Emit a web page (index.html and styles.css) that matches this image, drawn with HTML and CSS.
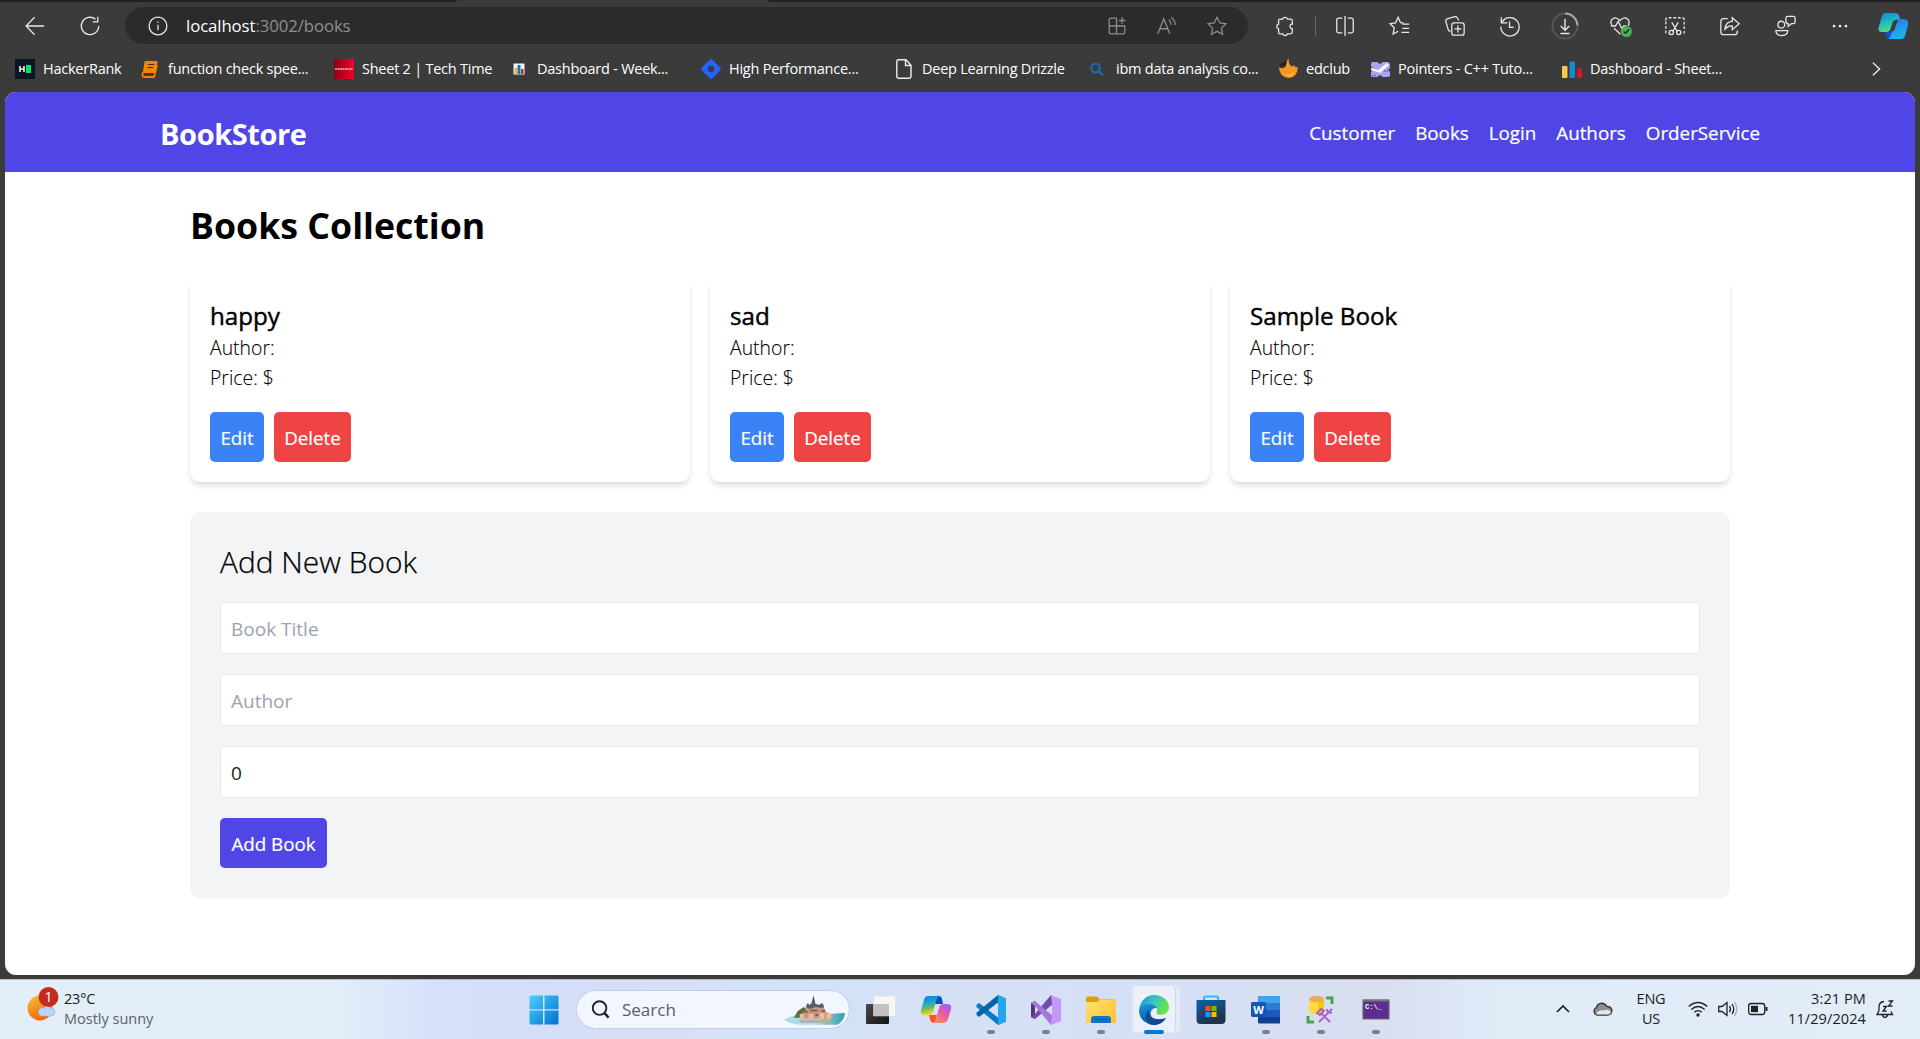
FILE: index.html
```html
<!DOCTYPE html>
<html lang="en">
<head>
<meta charset="utf-8">
<title>BookStore</title>
<link rel="stylesheet" href="styles.css">
</head>
<body>
<div class="screen">
  <header class="browser">
    <div class="tabstrip"><i class="tab-left"></i><i class="tab-right"></i></div>
    <div class="toolbar">
      <div class="nav-buttons">
        <svg class="ico" viewBox="0 0 24 24"><path d="M22 12H2.500M11.500 2.500L2.300 12l9.200 9.500"/></svg>
        <svg class="ico" viewBox="0 0 24 24"><path d="M21.500 12A9.500 9.500 0 1 1 18 4.600M20.500 2v5.500h-5.500"/></svg>
      </div>
      <div class="address">
        <svg class="ico info" viewBox="0 0 24 24"><circle cx="12" cy="12" r="9.700"/><path d="M12 10.500v6M12 7v1.500"/></svg>
        <span class="url"><b>localhost</b>:3002/books</span>
        <div class="address-icons">
          <svg class="ico" viewBox="0 0 24 24"><path d="M3.500 5a1.500 1.500 0 0 1 1.500-1.500h6.500v17H5A1.500 1.500 0 0 1 3.500 19zM3.500 12H20.500v7a1.500 1.500 0 0 1-1.500 1.500h-7.500M17.500 2.500v7M14 6h7"/></svg>
          <svg class="ico" viewBox="0 0 24 24"><path d="M2 20.500L8.500 4l6.500 16.500M4.500 15h8M14 5q2.500 2.200 2.500 5.500M16.500 2.500q4.500 3.500 4.500 8.500"/></svg>
          <svg class="ico" viewBox="0 0 24 24"><path d="M12 2.500l3 6.200 6.800.9-5 4.700 1.300 6.800-6.100-3.300-6.100 3.300 1.300-6.800-5-4.700 6.800-.9z"/></svg>
        </div>
      </div>
      <div class="actions">
        <div class="ext"><svg class="ico" viewBox="0 0 24 24"><path d="M6.500 4.500H9.500a2.700 2.700 0 0 1 5.200 0H18q2 0 2 2v3.500h-1a2.600 2.600 0 0 0 0 4.800h1v3.700q0 2-2 2H14.700a2.700 2.700 0 0 1-5.200 0H6.500q-1.500 0-1.500-1.500v-3.800a2.700 2.700 0 0 1 0-5.200V6q0-1.500 1.500-1.500z"/></svg></div>
        <svg class="ico" viewBox="0 0 24 24"><path d="M12 1v22M9 3.500H5a2 2 0 0 0-2 2v12a2 2 0 0 0 2 2h4M15 3.500h4a2 2 0 0 1 2 2v12a2 2 0 0 1-2 2h-4"/></svg>
        <svg class="ico" viewBox="0 0 24 24"><path d="M16 8.800l-3.500-.4L10 2.500 7.200 8.600l-6 .8 4.500 4.500-1.200 6.800 5.500-3M14.500 10H22M14.500 14.500H22M13.500 19H22"/></svg>
        <svg class="ico" viewBox="0 0 24 24"><rect x="8.500" y="8.500" width="13.500" height="13.500" rx="2.500"/><path d="M15.200 11.500v7.500M11.500 15.200H19M7 18c-2-.5-2.500-1.500-3-4L2 7q-.4-2 2-3l7-2q2.500-.5 3.500 1l1.500 3"/></svg>
        <svg class="ico" viewBox="0 0 24 24"><path d="M3 8.500A10 10 0 1 1 2 12.500M2.500 2.500v6H9M11.500 7v6.500h4.500"/></svg>
        <svg class="ico big" viewBox="0 0 28 28"><circle cx="14" cy="14" r="12.500" stroke="#565656" stroke-width="2"/><path d="M14 1.500A12.500 12.500 0 0 1 26.500 13.500" stroke="#aaa" stroke-width="2"/><path d="M14 7v11M9.800 14l4.200 4.300 4.200-4.300M9.500 21.500h9"/></svg>
        <svg class="ico" viewBox="0 0 24 24"><path d="M3 11C0 5 6 0 12 6c6-6 12-1 9 6M2 12h5l3-5 4 8 2-3h3M5.500 14.500l7 6.500"/><circle cx="19" cy="18" r="6" fill="#4caf50" stroke="none"/><path d="M16 18l2 2 4-4.500" stroke="#222"/></svg>
        <svg class="ico" viewBox="0 0 24 24"><path d="M2 6V5q0-2 2-2h16q2 0 2 2v14q0 1.500-2 1.500h-1M2 7v12q0 1.500 2 1.500h1" stroke-dasharray="3 2"/><path d="M8.500 8l6 10M15.500 8l-6 10"/><circle cx="8" cy="19" r="2.300"/><circle cx="16" cy="19" r="2.300"/></svg>
        <svg class="ico" viewBox="0 0 24 24"><path d="M9.500 4H5a3 3 0 0 0-3 3v11.500a3 3 0 0 0 3 3h12a3 3 0 0 0 3-3V17M14.500 3L22 9.500 14.500 16v-4Q10 11.500 6.500 15.500 7 7.500 14.500 7z"/></svg>
        <svg class="ico" viewBox="0 0 24 24"><circle cx="8" cy="10.500" r="3.700"/><path d="M2 17h13q0 5.500-6.500 5.500T2 17zM13 3.500q0-2 2-2h6q2 0 2 2v4q0 2-2 2h-2l-3.500 3v-3q-2.500 0-2.500-3z"/></svg>
        <svg class="ico" viewBox="0 0 24 24"><g fill="#eee" stroke="none"><circle cx="5.500" cy="12" r="1.500"/><circle cx="12" cy="12" r="1.500"/><circle cx="18.500" cy="12" r="1.500"/></g></svg>
        <svg class="copilot-top" viewBox="0 0 31 28"><defs><linearGradient id="ca" x2=".3" y2="1"><stop stop-color="#0a86d8"/><stop offset=".5" stop-color="#19b8c0"/><stop offset="1" stop-color="#58dc82"/></linearGradient><linearGradient id="cb" x2=".3" y2="1"><stop stop-color="#2d75e8"/><stop offset="1" stop-color="#19b4f0"/></linearGradient></defs><path d="M7 20h7l3-1-3 7q-3 2-5 0z" fill="#1a4fd0"/><path d="M7 1h11q3 0 4 6l-4 1q-3 0-4 4l-2 6q-1 2-4 2H4q-5 0-3-6L4 4q1-3 3-3z" fill="url(#ca)"/><path d="M19 7h7q5 0 4 6l-3 11q-1 3-4 3H10q2-1 3-4l4-13q1-3 2-3z" fill="url(#cb)"/><path d="M18 8h2l-4 11h-3l2-8q1-3 3-3z" fill="#3b3b3b"/></svg>
      </div>
    </div>
    <div class="bookmarks">
      <div class="bm"><svg viewBox="0 0 20 20"><path fill="#0b1424" d="M0 0h20v20H0z"/><path d="M5 7v6M9 7v6M5 10h4" stroke="#eee" stroke-width="1.600"/><path fill="#0be560" d="M11 6h5v8h-5z"/></svg><span>HackerRank</span></div>
      <div class="bm"><svg viewBox="0 0 20 20"><path d="M5.500 3h11l-2.500 10H4z" fill="#f88305" stroke="#f88305" stroke-width="2" stroke-linejoin="round"/><path d="M3 13q-1.500 5 1.500 5h9.500l3-12" fill="none" stroke="#f88305" stroke-width="1.800"/><path d="M8 5.500h6M7 8.500h6M5 15.500h9" stroke="#4b2b0a" stroke-width="1.200"/></svg><span>function check spee...</span></div>
      <div class="bm"><svg viewBox="0 0 20 20"><defs><linearGradient id="rd"><stop stop-color="#8c0012"/><stop offset="1" stop-color="#f5002d"/></linearGradient></defs><path fill="url(#rd)" d="M0 0h20v20H0z"/><path d="M1 10h18" stroke="#f6b9bf" stroke-width="1.500" stroke-dasharray="2 .5"/></svg><span>Sheet 2 | Tech Time</span></div>
      <div class="bm"><svg viewBox="0 0 20 20"><path fill="#f5f5f5" d="M4.500 4.500h11v11h-11z"/><path fill="#e8b73a" d="M5.500 9h2.500v6H5.500z"/><path fill="#1679b8" d="M8.500 6h3V15h-3z"/><path fill="#b32" d="M12 10h2.500v5H12z"/></svg><span>Dashboard - Week...</span></div>
      <div class="bm"><svg viewBox="0 0 20 20"><path d="M10 1.500L18.500 10 10 18.500 1.500 10z" fill="#2563ff" stroke="#2563ff" stroke-width="3" stroke-linejoin="round"/><circle cx="10" cy="10" r="3.200" fill="#3b3b3b"/></svg><span>High Performance...</span></div>
      <div class="bm"><svg viewBox="0 0 20 20"><path d="M4.500.8h7.500l5 5.500V17.500q0 1.700-1.700 1.700H4.500q-1.700 0-1.700-1.700v-15Q2.800.8 4.500.8zM11.500 1v5.500H17" fill="none" stroke="#eee" stroke-width="1.400"/></svg><span>Deep Learning Drizzle</span></div>
      <div class="bm"><svg viewBox="0 0 20 20"><circle cx="7.500" cy="9" r="4.300" fill="none" stroke="#1374cf" stroke-width="1.700"/><path d="M10.800 12.200l4 4" stroke="#1374cf" stroke-width="2"/></svg><span>ibm data analysis co...</span></div>
      <div class="bm"><svg viewBox="0 0 20 20"><path d="M1 8q4 3 7-1V2l3-2q-1 4 2 7 2 1 3-1 1 3 4 2-1 11-9 11Q1 18 1 8z" fill="#f79621"/><path d="M1.500 7q2-4 5.500-4l1-2 1 2-1.500 4-3-.5-1 2z" fill="#2d201b"/><path d="M6 14q6 4 11-3-1 7-7 7z" fill="#ffb34a"/></svg><span>edclub</span></div>
      <div class="bm"><svg viewBox="0 0 20 20"><path d="M2 3h5l3 2 3-2h5l2 2v4l-2 2 2 2v4l-2 1h-5l-3-2-3 2H2l-1-1v-4l2-3-2-3V5z" fill="#a9a5f4"/><path d="M1 9l7 2 9-7 2 2-9 8-9-3z" fill="#f8f8ff"/><path d="M2 16.500h4M14 12h4" stroke="#6a65c8" stroke-width="1.600" stroke-dasharray="1.500 1"/></svg><span>Pointers - C++ Tuto...</span></div>
      <div class="bm"><svg viewBox="0 0 20 20"><rect y="7" width="5.500" height="12" rx="1" fill="#f7c948"/><rect x="7.500" y="2.500" width="5.500" height="16.500" rx="1" fill="#168bd0"/><rect x="15" y="9" width="5" height="10" rx="1" fill="#c41e2c"/></svg><span>Dashboard - Sheet...</span></div>
      <svg class="more" viewBox="0 0 10 16"><path d="M1 1l7.500 7L1 15"/></svg>
    </div>
  </header>

  <main class="page">
    <nav class="site-nav">
      <a class="brand">BookStore</a>
      <div class="links"><a>Customer</a><a>Books</a><a>Login</a><a>Authors</a><a>OrderService</a></div>
    </nav>
    <div class="content">
      <h1>Books Collection</h1>
      <div class="cards">
        <article class="card"><h2>happy</h2><p>Author:</p><p>Price: $</p><div class="buttons"><button class="edit">Edit</button><button class="delete">Delete</button></div></article>
        <article class="card"><h2>sad</h2><p>Author:</p><p>Price: $</p><div class="buttons"><button class="edit">Edit</button><button class="delete">Delete</button></div></article>
        <article class="card"><h2>Sample Book</h2><p>Author:</p><p>Price: $</p><div class="buttons"><button class="edit">Edit</button><button class="delete">Delete</button></div></article>
      </div>
      <form class="add-form">
        <h2>Add New Book</h2>
        <input placeholder="Book Title">
        <input placeholder="Author">
        <input value="0">
        <button type="button" class="add">Add Book</button>
      </form>
    </div>
  </main>

  <footer class="taskbar">
    <div class="weather">
      <svg viewBox="0 0 34 36"><defs><linearGradient id="sun" x2=".4" y2="1"><stop stop-color="#f3c234"/><stop offset="1" stop-color="#f56a0c"/></linearGradient></defs><circle cx="13" cy="22" r="12.500" fill="url(#sun)"/><path d="M14 30a4 4 0 0 1-1-7q1-2 4-1 3-5 7 0 4 0 4 4 0 4-4 4z" fill="#b9d4fa" stroke="#8cb2ea" stroke-width=".6"/><circle cx="21.500" cy="11" r="10" fill="#c42b1c"/><text x="21.500" y="16" text-anchor="middle" class="badge-num">1</text></svg>
      <div><div class="temp">23°C</div><div class="sky">Mostly sunny</div></div>
    </div>
    <div class="apps">
      <div class="app start"><svg viewBox="0 0 30 30"><defs><linearGradient id="win" x2="1" y2="1"><stop stop-color="#4bd0ff"/><stop offset="1" stop-color="#0070cf"/></linearGradient></defs><path d="M2 .5h12v13.700H.5V2Q.5.500 2 .5zM15.500.5H28q1.500 0 1.500 1.500v12.200h-14zM.5 15.500H14v14H2q-1.500 0-1.500-1.500zM15.500 15.500h14V28q0 1.500-1.500 1.500H15.500z" fill="url(#win)"/></svg></div>
      <div class="search">
        <svg class="lens" viewBox="0 0 20 20"><circle cx="9" cy="8.500" r="7.200"/><path d="M14 13.500l4.500 5" stroke-width="2.600"/></svg>
        <span>Search</span>
        <svg class="castle" viewBox="0 0 62 30"><defs><linearGradient id="sea" x2="1"><stop stop-color="#a8dbe8"/><stop offset=".5" stop-color="#b9dde3"/><stop offset="1" stop-color="#2e9fae"/></linearGradient></defs><path d="M0 25q8-5 14-5l30-1 18-1q-1 9-8 12H16Q6 29 0 25z" fill="url(#sea)"/><path d="M10 23l4-7 6-4 4 3v8z" fill="#5b6d42"/><path d="M17 24v-5l5-3 1-5h3l1-2h2l1.300-8L31.500 9h3l1 3 5 0 2 5 5 2 3 5z" fill="#c39a81"/><path d="M22 12l2-4 2 2 2-2 2-8 2 9 3 1 4-2 2 4-3 1-6-1-6 2z" fill="#54606c"/><path d="M16 19h4v5h-4zM25 19h5v5h-5zM36 18h5v6h-5zM43 19h5v5h-5z" fill="#edbd9b"/><path d="M21 17h3M27 15.500h7M32 20h3M38 16h4" stroke="#77503f" stroke-width="1.500"/><path d="M15 25h32v3H17z" fill="#a3b4ae"/></svg>
      </div>
      <div class="app"><svg viewBox="0 0 30 30"><defs><linearGradient id="tv" x2="1" y2="1"><stop stop-color="#4b4b4b"/><stop offset="1" stop-color="#111"/></linearGradient></defs><rect y="9" width="23" height="20" rx="1" fill="url(#tv)"/><rect x="7.500" y="1" width="22" height="20" rx="1" fill="#f6f6f6" stroke="#ddd" stroke-width=".5"/><path d="M7.500 9H23v12H7.500z" fill="#c2c2c2"/></svg></div>
      <div class="app"><svg viewBox="0 0 30 30"><defs><linearGradient id="cl" x2=".2" y2="1"><stop stop-color="#147ee3"/><stop offset=".4" stop-color="#18a5d2"/><stop offset=".7" stop-color="#70bf52"/><stop offset="1" stop-color="#fdd01d"/></linearGradient><linearGradient id="cr" x1=".8" x2=".2" y2="1"><stop stop-color="#9c5cf5"/><stop offset=".5" stop-color="#ef5aa3"/><stop offset="1" stop-color="#fb9252"/></linearGradient></defs><path d="M15 1q5-1 6 3l1 5h-8z" fill="#1646c6"/><path d="M8 20h8l-2 8q-4 0-5-3z" fill="#f4592b"/><path d="M7 1h12q-3 1-4 5l-3 11q-1 3-4 3H4q-5 0-4-5L3 5q1-4 4-4z" fill="url(#cl)"/><path d="M23 9h3q5 0 4 5l-3 10q-1 4-5 4H11q3-1 4-4l3-11q1-4 5-4z" fill="url(#cr)"/></svg></div>
      <div class="app running"><svg viewBox="0 0 30 30"><path d="M22 0l8 3.500v23L22 30 1 12.500q-1.500-1.500 0-3L3 8l19 14.500z" fill="#087bc4"/><path d="M22 0v7.500L3 22l-2.200-2q-1-1 0-2.500z" fill="#0065a9"/><path d="M22 0l8 3.500v23L22 30z" fill="#25a5ee"/></svg></div>
      <div class="app running"><svg viewBox="0 0 30 30"><path d="M0 8l4-2v18l-4-2z" fill="#52357d"/><path d="M4 24l-4-2 4-3L20 0l2 9z" fill="#744aae"/><path d="M0 8l4-2 18 15-2 9L4 11z" fill="#a477dd"/><path d="M20 0l10 4v22l-10 4 1-9V9z" fill="#c796f8"/></svg></div>
      <div class="app running"><svg viewBox="0 0 30 30"><defs><linearGradient id="fo" x2="1" y2="1"><stop stop-color="#ffdf70"/><stop offset="1" stop-color="#ffc22e"/></linearGradient></defs><path d="M0 3q0-1.500 1.500-1.500H11l3 3h14.500q1.500 0 1.500 1.500v4H0z" fill="#e0a00b"/><path d="M0 7h11l3-2h16v23H0z" fill="url(#fo)"/><path d="M5 28v-4q0-3 3-3h14q3 0 3 3v4z" fill="#0d78cb"/><path d="M8.500 24.500h13" stroke="#095392" stroke-width="1.200"/></svg></div>
      <div class="app running active"><svg viewBox="0 0 30 30"><defs><linearGradient id="eg" x2="1" y2=".4"><stop stop-color="#1588d7"/><stop offset=".5" stop-color="#35c4c8"/><stop offset="1" stop-color="#69e34e"/></linearGradient><linearGradient id="eb" y2="1" x2=".3"><stop stop-color="#1797df"/><stop offset="1" stop-color="#0d56a4"/></linearGradient></defs><path d="M0 14C2 5 8 0 15 0c9 0 15 6 15 12 0 5-4 8-8 8-6 0-4-3-4-5 0-6-10-8-18-1z" fill="url(#eg)"/><path d="M0 15c3-7 15-8 18-2-5 0-7 3-6 7 1 5 8 7 15 3-4 7-13 9-19 5C3 26 0 21 0 15z" fill="url(#eb)"/><path d="M11 14c-4 6 3 13 16 9-4 6-10 8-15 6-7-3-7-11-1-15z" fill="#12488d"/></svg></div>
      <div class="app"><svg viewBox="0 0 30 30"><defs><linearGradient id="st" x2=".5" y2="1"><stop stop-color="#0b62b0"/><stop offset="1" stop-color="#203247"/></linearGradient></defs><path d="M8 6V3q0-1.500 1.500-1.500h11Q22 1.500 22 3v3" fill="none" stroke="#28c2f7" stroke-width="2.200"/><path d="M.5 5h29v20q0 4-4 4h-21q-4 0-4-4z" fill="url(#st)"/><path d="M9.500 11h5v5h-5z" fill="#f25022"/><path d="M15.500 11h5v5h-5z" fill="#7fba00"/><path d="M9.500 17h5v5h-5z" fill="#00a4ef"/><path d="M15.500 17h5v5h-5z" fill="#ffb900"/></svg></div>
      <div class="app running"><svg viewBox="0 0 30 30"><path d="M7 1h22v7H7z" fill="#41a5ee"/><path d="M7 8h22v7H7z" fill="#2b7cd3"/><path d="M7 15h22v7H7z" fill="#185abd"/><path d="M7 22h22v6.500H8q-1 0-1-1z" fill="#103f91"/><rect y="7" width="15" height="15" rx="1.500" fill="#1556b3"/><text x="7.500" y="18.500" class="word-letter" text-anchor="middle">W</text></svg></div>
      <div class="app running"><svg viewBox="0 0 30 30"><path d="M3 4v13q7 5 15 0V4z" fill="#fedb3d"/><path d="M12 5h6v12q-3 2-6 2z" fill="#f5c916"/><ellipse cx="10.500" cy="4" rx="7.500" ry="3.200" fill="#efa756"/><path d="M20 3h6v6M2 21v6h6" fill="none" stroke="#48a34f" stroke-width="3"/><path d="M13 27l10-10M15 18l9 9M11 18l4-4 3 2-4 4zM21 14q0 4 5 4M23 17l3-3" fill="none" stroke="#a95ccd" stroke-width="1.800"/></svg></div>
      <div class="app running"><svg viewBox="0 0 30 30"><path d="M2 5h26v19H2z" fill="#5c2d91" stroke="#6c6c6c" stroke-width="1.200"/><path d="M2 4.500h26v2H2z" fill="#777"/><text x="4" y="14" class="prompt">C:\_</text></svg></div>
    </div>
    <div class="tray">
      <svg class="t-up" viewBox="0 0 20 20"><path d="M4 13l6-6 6 6" stroke-width="1.700"/></svg>
      <svg class="t-cloud" viewBox="0 0 20 20"><path d="M4 16a4 4 0 0 1-.5-7.500C4 5 10 1.500 14 7.500c5 0 6 4.500 4 7q-1 1.500-3 1.500z" fill="#8d8d8d" stroke="#333"/><path d="M3 15q3-5 8-3.500 4-2 7 1.500-1 2.500-3 2.500H5z" fill="#e6e6e6" stroke="none"/></svg>
      <div class="lang"><div>ENG</div><div>US</div></div>
      <svg class="t-wifi" viewBox="0 0 20 20"><path d="M.7 7.500q9.300-8 18.600 0M3.300 10.500q6.700-6 13.400 0M6.200 13.300q3.800-3.400 7.600 0"/><circle cx="10" cy="16" r="1.700" fill="#222" stroke="none"/></svg>
      <svg class="t-sound" viewBox="0 0 20 20"><path d="M.7 7.500H4L9 3.500v13L4 12.500H.7z"/><path d="M11.500 7q2 3 0 6M14 5q3.500 5 0 10"/><path d="M16.500 3q4.500 7 0 14" stroke="#aab"/></svg>
      <svg class="t-batt" viewBox="0 0 20 20"><rect x=".7" y="4.500" width="16" height="11" rx="2.500"/><path d="M3 6.800h7v6.400H3z" fill="#222" stroke="none"/><path d="M18.500 8v4" stroke-width="2"/></svg>
      <div class="clock"><div>3:21 PM</div><div>11/29/2024</div></div>
      <svg class="t-bell" viewBox="0 0 20 20"><path d="M9 2.500Q4 3 4 8v3.500l-2 4h15.500l-1.500-3M7.500 16q.5 2.500 2.500 2.500T12.500 16M8 7.500h3.500l-3.500 4.500h3.500M13.500 2h4l-4 5h4"/></svg>
    </div>
  </footer>
</div>
</body>
</html>
```
FILE: styles.css
```css
* { box-sizing: border-box; }
body { margin: 0; font-family: "Open Sans", "Noto Sans", sans-serif; overflow: hidden; }
svg { display: block; flex: none; overflow: visible; }
.screen { width: 1920px; height: 1039px; display: flex; flex-direction: column; background: #3b3b3b; }

/* Browser chrome */
.browser { height: 92px; display: flex; flex-direction: column; }
.tabstrip { height: 2px; display: flex; justify-content: space-between; }
.tab-left { width: 457px; background: #202020; border-bottom-right-radius: 4px; }
.tab-right { width: 1152px; background: #202020; border-bottom-left-radius: 4px; }
.toolbar { height: 47px; display: flex; align-items: center; }
.ico { width: 22px; height: 22px; fill: none; stroke: #e8e8e8; stroke-width: 1.4; }
.big { width: 28px; height: 28px; }
.nav-buttons { width: 125px; padding-left: 24px; display: flex; gap: 33px; }
.address { width: 1123px; height: 37px; border-radius: 19px; background: #2b2b2b; display: flex; align-items: center; padding: 0 20px 0 22px; }
.url { margin-left: 17px; font-size: 16.8px; letter-spacing: -.1px; color: #8f8f8f; flex: 1; white-space: nowrap; }
.url b { color: #fff; font-weight: 400; }
.address-icons { display: flex; gap: 28px; }
.address-icons .ico { stroke: #8c8c8c; }
.actions { flex: 1; display: grid; grid-template-columns: 69px repeat(10, 55px) 53px; justify-items: center; align-items: center; }
.ext { justify-self: start; width: 68px; height: 20px; padding-left: 26px; display: flex; align-items: center; border-right: 1px solid #666; }
.copilot-top { width: 31px; height: 28px; }
.bookmarks { height: 43px; padding: 0 0 4px 15px; display: grid; grid-template-columns: 125px 194px 175px 192px 193px 194px 190px 92px 192px 310px 20px; align-items: center; }
.bm { display: flex; align-items: center; gap: 8px; font-size: 14.500px; letter-spacing: -.24px; color: #fff; white-space: nowrap; }
.bm svg { width: 20px; height: 20px; }
.more { width: 9px; height: 16px; fill: none; stroke: #eee; stroke-width: 1.5; }

/* Book store page */
.page { height: 883px; margin: 0 5px; background: #fff; border-radius: 11px; overflow: hidden; }
.site-nav { height: 80px; padding: 2px 155px 0; display: flex; align-items: center; justify-content: space-between; background: #4f46e5; color: #fff; }
.brand { font-size: 29px; font-weight: 700; letter-spacing: -.4px; }
.links { display: flex; gap: 20px; font-size: 18.800px; -webkit-text-stroke: .2px; }
.content { padding: 28px 185px 0; }
h1, h2, p { margin: 0; }
h1 { font-size: 35.700px; line-height: 50px; font-weight: 700; margin-bottom: 27px; }
.cards { display: grid; grid-template-columns: repeat(3, 1fr); gap: 20px; }
.card { height: 205px; padding: 22px 20px 18px; border-radius: 10px; background: #fff; box-shadow: 0 5px 7.500px -1px rgba(0,0,0,.1), 0 2.500px 5px -2.500px rgba(0,0,0,.1); }
.card h2 { font-size: 24.200px; line-height: 34px; font-weight: 400; -webkit-text-stroke: .45px; }
.card p { font-size: 19.400px; line-height: 30px; font-weight: 300; -webkit-text-stroke: .1px; }
.buttons { display: flex; gap: 10px; margin-top: 19px; }
button { font: 400 18.800px/30px "Open Sans", "Noto Sans", sans-serif; color: #fff; border: 0; border-radius: 5px; height: 50px; padding: 2px 0 0; letter-spacing: -.05px; -webkit-text-stroke: .2px; }
.edit { width: 54px; background: #3b82f6; }
.delete { width: 77px; background: #ef4444; }
.add-form { margin-top: 30px; height: 386px; border-radius: 10px; background: #f3f4f6; padding: 30px; display: flex; flex-direction: column; align-items: flex-start; }
.add-form h2 { font-size: 29.900px; line-height: 40px; font-weight: 300; margin-bottom: 20px; -webkit-text-stroke: .25px; }
input { width: 100%; height: 52px; margin: 0 0 20px; padding: 2px 10px 0; border: 1px solid #e5e7eb; border-radius: 5px; background: #fff; font: 400 19px/30px "Open Sans", "Noto Sans", sans-serif; color: #222; }
input::placeholder { color: #9ca3af; opacity: 1; }
.add { width: 107px; background: #4f46e5; }

/* Taskbar */
.taskbar { margin-top: 4px; height: 60px; border-top: 1px solid #b9bec6; background: linear-gradient(90deg, #e2eef8 0, #e3eef9 330px, #d6e2fa 430px, #d3def7 520px, #d8dff5 680px, #d2e3f9 780px, #d7dff4 1000px, #d5e0f7 1100px, #d9def0 1380px, #e0ebf8 1500px, #e2edf8 1920px); display: flex; color: #1b1b1b; }
.weather { width: 521px; padding-left: 27px; display: flex; gap: 3px; font-size: 14.500px; line-height: 20px; padding-top: 9px; }
.weather svg { width: 34px; height: 36px; margin-top: -3px; }
.temp { letter-spacing: -.2px; }
.sky { color: #5c6167; }
.badge-num { font-size: 14px; fill: #fff; }
.apps { width: 1022px; display: flex; }
.app { width: 55px; height: 59px; display: flex; flex-direction: column; align-items: center; padding-top: 15px; flex: none; }
.app svg { width: 30px; height: 30px; }
.start { width: 45px; }
.search { width: 274px; height: 39px; margin: 10px 3px 0 10px; padding: 0 4px 0 14px; border: 1px solid #c2cee4; border-radius: 20px; background: #f2f6fe; display: flex; align-items: center; font-size: 17px; color: #5a5d63; }
.lens { width: 19px; height: 19px; margin-right: 12px; fill: none; stroke: #222; stroke-width: 2; }
.search span { flex: 1; }
.castle { width: 61px; height: 30px; }
.running::after { content: ""; width: 8px; height: 4px; border-radius: 2px; margin-top: 5px; background: #7c808b; }
.active { width: 48px; height: 48px; margin: 5px 3px 0 4px; padding: 10px 5px 0 0; border-radius: 5px; background: #ecf0fa; box-shadow: inset -4px 0 #e4e9f6, inset -5px 0 #d2d7e4, inset 0 0 0 1px #dfe4ef; }
.active::after { width: 20px; flex: none; background: #0078d4; }
.word-letter { font-size: 11px; font-weight: 700; fill: #fff; }
.prompt { font: 700 7px "Liberation Mono", monospace; fill: #fff; }
.tray { flex: 1; display: flex; align-items: flex-start; padding-left: 10px; font-size: 14.500px; line-height: 20px; }
.tray svg { width: 20px; height: 20px; margin-top: 19px; fill: none; stroke: #222; stroke-width: 1.300; }
.t-cloud { margin-left: 20px; }
.lang { width: 36px; margin: 9px 19px 0 20px; text-align: center; letter-spacing: -.2px; }
.t-sound, .t-batt { margin-left: 10px; }
.clock { width: 98px; margin: 9px 9px 0 0; text-align: right; letter-spacing: .1px; }
```
